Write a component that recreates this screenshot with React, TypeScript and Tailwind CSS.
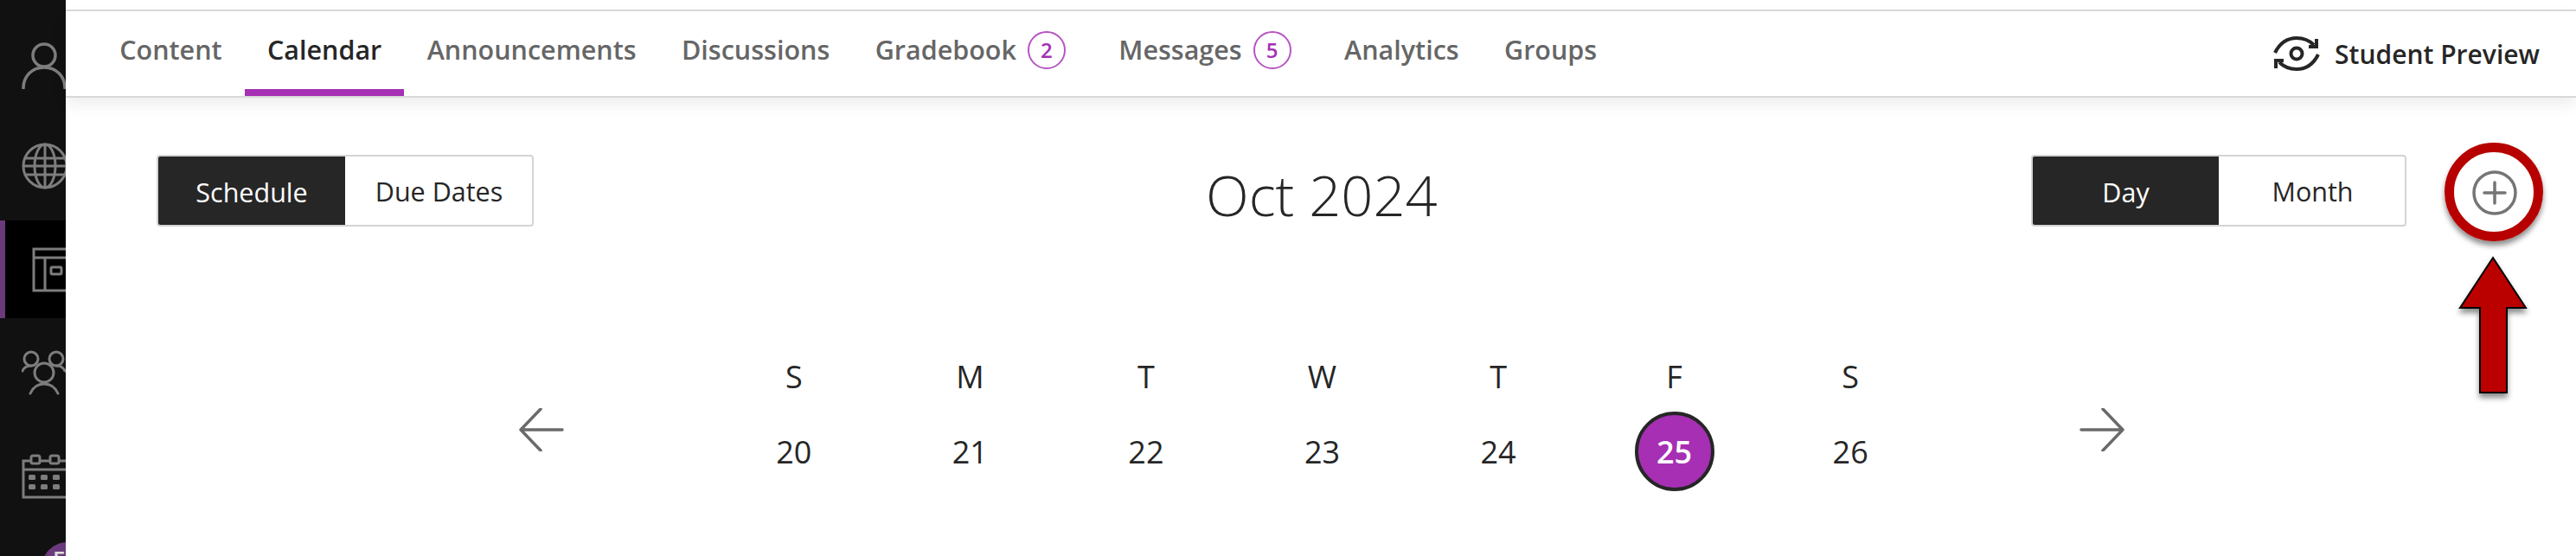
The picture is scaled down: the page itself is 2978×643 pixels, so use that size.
const tabs = [
  { label: "Content" },
  { label: "Calendar", active: true },
  { label: "Announcements" },
  { label: "Discussions" },
  { label: "Gradebook", count: 2 },
  { label: "Messages", count: 5 },
  { label: "Analytics" },
  { label: "Groups" },
]

const days = [
  { letter: "S", num: 20 },
  { letter: "M", num: 21 },
  { letter: "T", num: 22 },
  { letter: "W", num: 23 },
  { letter: "T", num: 24 },
  { letter: "F", num: 25, today: true },
  { letter: "S", num: 26 },
]

const UserIcon = () => (
  <svg width="52" height="54" viewBox="0 0 52 54" fill="none" stroke="#7d7d7d" strokeWidth="3.5" className="shrink-0">
    <circle cx="26" cy="15" r="13" />
    <path d="M2 53c0-14 10-24 24-24s24 10 24 24" strokeLinecap="round" />
  </svg>
)

const GlobeIcon = () => (
  <svg width="54" height="54" viewBox="0 0 54 54" fill="none" stroke="#7d7d7d" strokeWidth="3" className="shrink-0">
    <circle cx="27" cy="27" r="25" />
    <ellipse cx="27" cy="27" rx="12" ry="25" />
    <path d="M27 2v50M3 18h48M2 27h50M3 37h48" />
  </svg>
)

const WindowIcon = () => (
  <svg width="60" height="52" viewBox="0 0 60 52" fill="none" stroke="#7d7d7d" strokeWidth="3" className="shrink-0">
    <path d="M2 2h56v48H2zM2 12h56M15 12v38" />
    <rect x="22" y="23" width="12" height="8" rx="1.5" />
  </svg>
)

const GroupIcon = () => (
  <svg width="60" height="52" viewBox="0 0 60 52" fill="none" stroke="#7d7d7d" strokeWidth="3" className="shrink-0">
    <circle cx="11" cy="10" r="8" />
    <circle cx="40" cy="10" r="8" />
    <circle cx="26" cy="26" r="11" />
    <path d="M1 24c2-5 6-6 10-6M50 24c-2-5-6-6-10-6M10 50c3-7 9-11 16-11s13 4 16 11" strokeLinecap="round" />
  </svg>
)

const CalendarIcon = () => (
  <svg width="60" height="52" viewBox="0 0 60 52" fill="none" stroke="#7d7d7d" strokeWidth="3" className="shrink-0">
    <path d="M2 50V8h56v42zM2 18h56" />
    <rect x="11" y="2" width="10" height="9" rx="2" fill="#111111" />
    <rect x="33" y="2" width="10" height="9" rx="2" fill="#111111" />
    <g fill="#7d7d7d" stroke="none">
      <rect x="8" y="24" width="8" height="6" rx="1.5" />
      <rect x="22" y="24" width="8" height="6" rx="1.5" />
      <rect x="36" y="24" width="8" height="6" rx="1.5" />
      <rect x="8" y="35" width="8" height="6" rx="1.5" />
      <rect x="22" y="35" width="8" height="6" rx="1.5" />
      <rect x="36" y="35" width="8" height="6" rx="1.5" />
    </g>
  </svg>
)

const PreviewIcon = () => (
  <svg width="54" height="40" viewBox="0 0 54 40" fill="none" stroke="#262626" strokeWidth="4" className="shrink-0">
    <path d="M2 19C8 7 17 2 27 2c7 0 14 2 20 8" />
    <path d="M52 21c-6 12-15 17-25 17-7 0-14-2-20-8" />
    <circle cx="27" cy="20" r="6.5" />
    <path d="M50 3v9H41M3 37v-9H12" />
  </svg>
)

const Arrow = ({ flip }: { flip?: boolean }) => (
  <svg width="52" height="50" viewBox="0 0 52 50" fill="none" stroke="#6a6a6a" strokeWidth="3.5" strokeLinecap="round" strokeLinejoin="round" className={flip ? "shrink-0 mt-[61px] -scale-x-100" : "shrink-0 mt-[61px]"}>
    <path d="M25 1L2 25l23 24M2 25h48" />
  </svg>
)

const App = () => {
  return (
    <div className="relative flex h-[643px] w-[2978px] overflow-hidden bg-white font-['Open_Sans',sans-serif] text-[#262626]">
      <div className="flex w-[76px] shrink-0 flex-col overflow-hidden bg-[#111111]">
        <div className="mt-[17px] flex h-[118px] shrink-0 items-center pl-[25px]"><UserIcon /></div>
        <div className="flex h-[120px] shrink-0 items-center pb-[6px] pl-[25px]"><GlobeIcon /></div>
        <div className="flex h-[113px] shrink-0 items-center border-l-[6px] border-[#6b3a7c] bg-black pl-[31px]"><WindowIcon /></div>
        <div className="flex h-[126px] shrink-0 items-center pl-[25px]"><GroupIcon /></div>
        <div className="flex h-[114px] shrink-0 items-center pl-[25px]"><CalendarIcon /></div>
        <div className="ml-[48px] mt-[19px] flex h-[60px] w-[60px] shrink-0 items-start justify-center rounded-full bg-[#6b3a7c] pr-[20px] pt-[6px] text-[26px] font-semibold leading-none text-[#dddddd]">F</div>
      </div>

      <div className="flex min-w-0 flex-1 flex-col">
        <div className="mt-[11px] flex h-[102px] shrink-0 items-stretch border-y-2 border-[#d8d8d8] pl-[36px] pr-[42px] shadow-[0_8px_16px_rgba(0,0,0,0.07)]">
          {tabs.map((tab) => (
            <div
              key={tab.label}
              className={
                tab.active
                  ? "flex items-center gap-[13px] border-b-[8px] border-[#a62fb4] px-[26.2px] text-[30.5px] font-semibold text-[#262626]"
                  : "flex items-center gap-[13px] border-b-[8px] border-transparent px-[26.2px] text-[30.5px] font-semibold text-[#666666]"
              }
            >
              {tab.label}
              {tab.count && (
                <span className="mr-[9px] flex h-[44px] w-[44px] items-center justify-center rounded-full border-2 border-[#b655c2] text-[24px] text-[#a62fb4]">
                  {tab.count}
                </span>
              )}
            </div>
          ))}
          <div className="ml-auto flex items-center gap-[17px] text-[30px] font-semibold">
            <PreviewIcon />
            Student Preview
          </div>
        </div>

        <div className="mt-[66px] flex shrink-0 items-center pl-[105px]">
          <div className="flex h-[83px] w-[436px] overflow-hidden rounded-[4px] border-2 border-[#d4d4d4] pt-[2px] text-[30.5px]">
            <div className="-mx-[2px] -my-[4px] flex w-[218px] items-center justify-center bg-[#262626] pl-[2px] pt-[2px] text-white">Schedule</div>
            <div className="flex flex-1 items-center justify-center pl-[3px]">Due Dates</div>
          </div>
          <div className="ml-[777px] pt-[10px] text-[65px] font-light leading-none">Oct 2024</div>
          <div className="ml-auto mr-[68px] flex items-center gap-[76px]">
            <div className="flex h-[83px] w-[434px] overflow-hidden rounded-[4px] border-2 border-[#d4d4d4] pt-[2px] text-[30.5px]">
              <div className="-mx-[2px] -my-[4px] flex w-[217px] items-center justify-center bg-[#262626] pl-[2px] pt-[2px] text-white">Day</div>
              <div className="flex flex-1 items-center justify-center pl-[4px]">Month</div>
            </div>
            <svg width="52" height="52" viewBox="0 0 52 52" fill="none" stroke="#757575" strokeWidth="3.5" strokeLinecap="round" className="mt-[5px]">
              <circle cx="26" cy="26" r="24" />
              <path d="M26 14v24M14 26h24" />
            </svg>
          </div>
        </div>

        <div className="mt-[149px] flex items-start pl-[524px]">
          <Arrow />
          <div className="ml-[164px] grid w-[1425px] shrink-0 grid-cols-7 text-center text-[36px]">
            {days.map((day, i) => (
              <div key={i} className="flex flex-col items-center">
                <div className="h-[50px] leading-[50px]">{day.letter}</div>
                <div
                  className={
                    day.today
                      ? "mt-[15px] flex h-[92px] w-[92px] items-center justify-center rounded-full border-4 border-[#262626] bg-[#a62fb4] pt-[2px] font-semibold text-white"
                      : "mt-[15px] flex h-[92px] w-[92px] items-center justify-center pt-[2px]"
                  }
                >
                  {day.num}
                </div>
              </div>
            ))}
          </div>
          <div className="ml-[163px]"><Arrow flip /></div>
        </div>
      </div>

      {/* annotation over the screenshot */}
      <div className="absolute left-[2826px] top-[165px] h-[114px] w-[114px] rounded-full border-[11px] border-[#b70000] shadow-[0_5px_6px_rgba(0,0,0,0.45)]" />
      <svg width="90" height="172" viewBox="0 0 90 172" className="absolute left-[2838px] top-[296px] drop-shadow-[0_5px_3px_rgba(0,0,0,0.45)]">
        <path d="M44 2l38 58H60v98H29V60H6z" fill="#bb0000" stroke="#000000" strokeWidth="2" />
      </svg>
    </div>
  )
}

export default App
